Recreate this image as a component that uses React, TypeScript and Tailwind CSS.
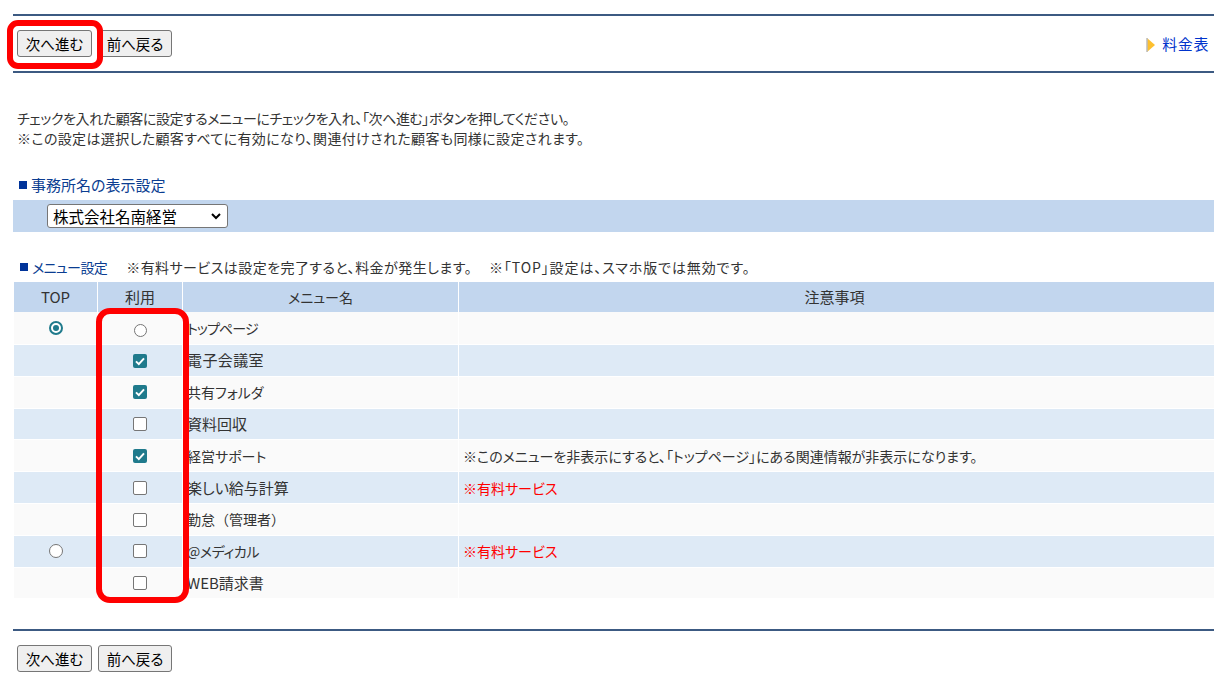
import React from 'react';

const menuRows = [
  { name: 'トップページ', top: 'on', use: 'radio', note: '', size: 'text-[14px] tracking-[-0.9px]', height: 'h-[33px]' },
  { name: '電子会議室', use: 'on', note: '', size: 'text-[15px] tracking-[0.4px]', height: 'h-[31.8px]' },
  { name: '共有フォルダ', use: 'on', note: '', size: 'text-[14px]', height: 'h-[31.8px]' },
  { name: '資料回収', use: 'off', note: '', size: 'text-[15px]', height: 'h-[31.8px]' },
  { name: '経営サポート', use: 'on', note: '※このメニューを非表示にすると、「トップページ」にある関連情報が非表示になります。', size: 'text-[14px]', height: 'h-[31.8px]' },
  { name: '楽しい給与計算', use: 'off', note: '※有料サービス', paid: true, size: 'text-[15px]', height: 'h-[31.8px]' },
  { name: '勤怠（管理者）', use: 'off', note: '', size: "text-[14px] [font-feature-settings:normal]", height: 'h-[31.8px]' },
  { name: '@メディカル', top: 'off', use: 'off', note: '※有料サービス', paid: true, size: 'text-[14px] tracking-[-0.4px]', height: 'h-[31.8px]' },
  { name: 'WEB請求書', use: 'off', note: '', size: 'text-[15px]', height: 'h-[31.8px]' },
];

const Check = ({ checked }: { checked: boolean }) =>
  checked ? (
    <span className="inline-flex h-[14px] w-[14px] -translate-y-[2px] items-center justify-center rounded-[2px] bg-[#1f7a8c] align-middle">
      <svg viewBox="0 0 14 14" className="h-[14px] w-[14px]">
        <path d="M3 7.4l2.8 2.7L11 4.4" fill="none" stroke="#fff" strokeWidth="2" />
      </svg>
    </span>
  ) : (
    <span className="inline-block h-[14px] w-[14px] -translate-y-[2px] rounded-[2px] border border-[#767676] bg-white align-middle" />
  );

const Radio = ({ checked, small }: { checked: boolean; small?: boolean }) => (
  <span
    className={`inline-flex items-center justify-center rounded-full border align-middle ${
      small ? 'h-[13px] w-[13px] border-[#767676] bg-white' : 'h-[14px] w-[14px] -translate-y-[2px] bg-white'
    } ${checked ? 'border-2 border-[#1f7a8c]' : 'border-[#767676]'}`}
  >
    {checked && <span className="h-[6px] w-[6px] rounded-full bg-[#1f7a8c]" />}
  </span>
);

const Buttons = () => (
  <div className="flex gap-[6px]">
    <button className="h-[27px] w-[75px] rounded-[3px] border border-[#767676] bg-[#efefef] text-[14.5px] text-black">
      次へ進む
    </button>
    <button className="h-[27px] w-[74px] rounded-[3px] border border-[#767676] bg-[#efefef] text-[14.5px] text-black">
      前へ戻る
    </button>
  </div>
);

export default function App() {
  return (
    <div className="relative h-[681px] w-[1231px] overflow-hidden bg-white pl-[13px] pr-[17px] pt-[14px] font-['Noto_Sans_CJK_JP',sans-serif] text-[14px] leading-[20px] text-[#333] [font-feature-settings:'palt']">
      {/* top bar */}
      <div className="flex h-[59px] items-center justify-between border-y-2 border-[#3c5a82] pl-[4px] pr-[5px]">
        <Buttons />
        <a className="flex items-center gap-[6px] text-[15px] tracking-[0.6px] text-[#0033cc]">
          <svg viewBox="0 0 10 16" className="mt-[3px] h-[16px] w-[10px]">
            <path d="M1 1v14l8-7z" fill="#fdc02f" />
            <path d="M1 1v14" stroke="#bbb" strokeWidth="1.5" />
          </svg>
          料金表
        </a>
      </div>

      <div className="mt-[35px] pl-[4px] text-[14px] leading-[20px]">
        <p className="tracking-[-0.43px]">チェックを入れた顧客に設定するメニューにチェックを入れ、「次へ進む」ボタンを押してください。</p>
        <p className="tracking-[0.37px]">※この設定は選択した顧客すべてに有効になり、関連付けされた顧客も同様に設定されます。</p>
      </div>

      <div className="mt-[27px] flex items-center pl-[6px] text-[15px] leading-[20px] text-[#0b3d91]">
        <span className="mr-[4px] h-[8px] w-[8px] bg-[#003399]" />
        事務所名の表示設定
      </div>
      <div className="mt-[5px] flex h-[32px] items-center bg-[#c2d6ee] pl-[34px]">
        <div className="flex h-[24px] w-[181px] items-center justify-between rounded-[3px] border border-[#767676] bg-white pl-[5px] pr-[5px] text-[15.5px] text-black">
          株式会社名南経営
          <svg viewBox="0 0 12 12" className="h-[12px] w-[12px]">
            <path d="M2 4l4 4 4-4" fill="none" stroke="#000" strokeWidth="2" />
          </svg>
        </div>
      </div>

      <div className="mt-[25px] flex items-center pl-[7px] text-[14px] leading-[20px]">
        <span className="mr-[4px] h-[8px] w-[8px] bg-[#003399]" />
        <span className="tracking-[-0.6px] text-[#0b3d91]">メニュー設定</span>
        <span className="ml-[19px] tracking-[0.45px]">※有料サービスは設定を完了すると、料金が発生します。</span>
        <span className="ml-[17px] tracking-[0.9px]">※「TOP」設定は、スマホ版では無効です。</span>
      </div>

      <table className="ml-px mt-[5px] w-[1200px] table-fixed border-separate border-spacing-0 text-[14px]">
        <colgroup>
          <col className="w-[84px]" />
          <col className="w-[85px]" />
          <col className="w-[276px]" />
          <col />
        </colgroup>
        <thead>
          <tr className="h-[30px] bg-[#c2d6ee] text-center font-normal">
            <th className="border-r border-white text-[15px] font-normal">TOP</th>
            <th className="border-r border-white text-[15px] font-normal">利用</th>
            <th className="border-r border-white font-normal">メニュー名</th>
            <th className="pr-[4px] text-[15px] font-normal">注意事項</th>
          </tr>
        </thead>
        <tbody>
          {menuRows.map((row, i) => (
            <tr key={row.name} className={`${row.height} ${i % 2 === 0 ? 'bg-[#fafafa]' : 'bg-[#deeaf6]'}`}>
              <td className="border-b border-r border-white text-center">
                {row.top && <Radio checked={row.top === 'on'} />}
              </td>
              <td className="border-b border-r border-white text-center">
                {row.use === 'radio' ? <Radio checked={false} small /> : <Check checked={row.use === 'on'} />}
              </td>
              <td className={`border-b border-r border-white pl-[4px] ${row.size}`}>{row.name}</td>
              <td className={`border-b border-white pl-[4px] ${row.paid ? 'text-[#ff0000]' : ''}`}>{row.note}</td>
            </tr>
          ))}
        </tbody>
      </table>

      <div className="mt-[30px] border-t-2 border-[#3c5a82] pl-[4px] pt-[14px]">
        <Buttons />
      </div>

      {/* red highlight frames */}
      <div className="absolute left-[7px] top-[20px] h-[49px] w-[96px] rounded-[11px] border-[6px] border-[#ff0000]" />
      <div className="absolute left-[96px] top-[308px] h-[295px] w-[93px] rounded-[14px] border-[6px] border-[#ff0000]" />
    </div>
  );
}
